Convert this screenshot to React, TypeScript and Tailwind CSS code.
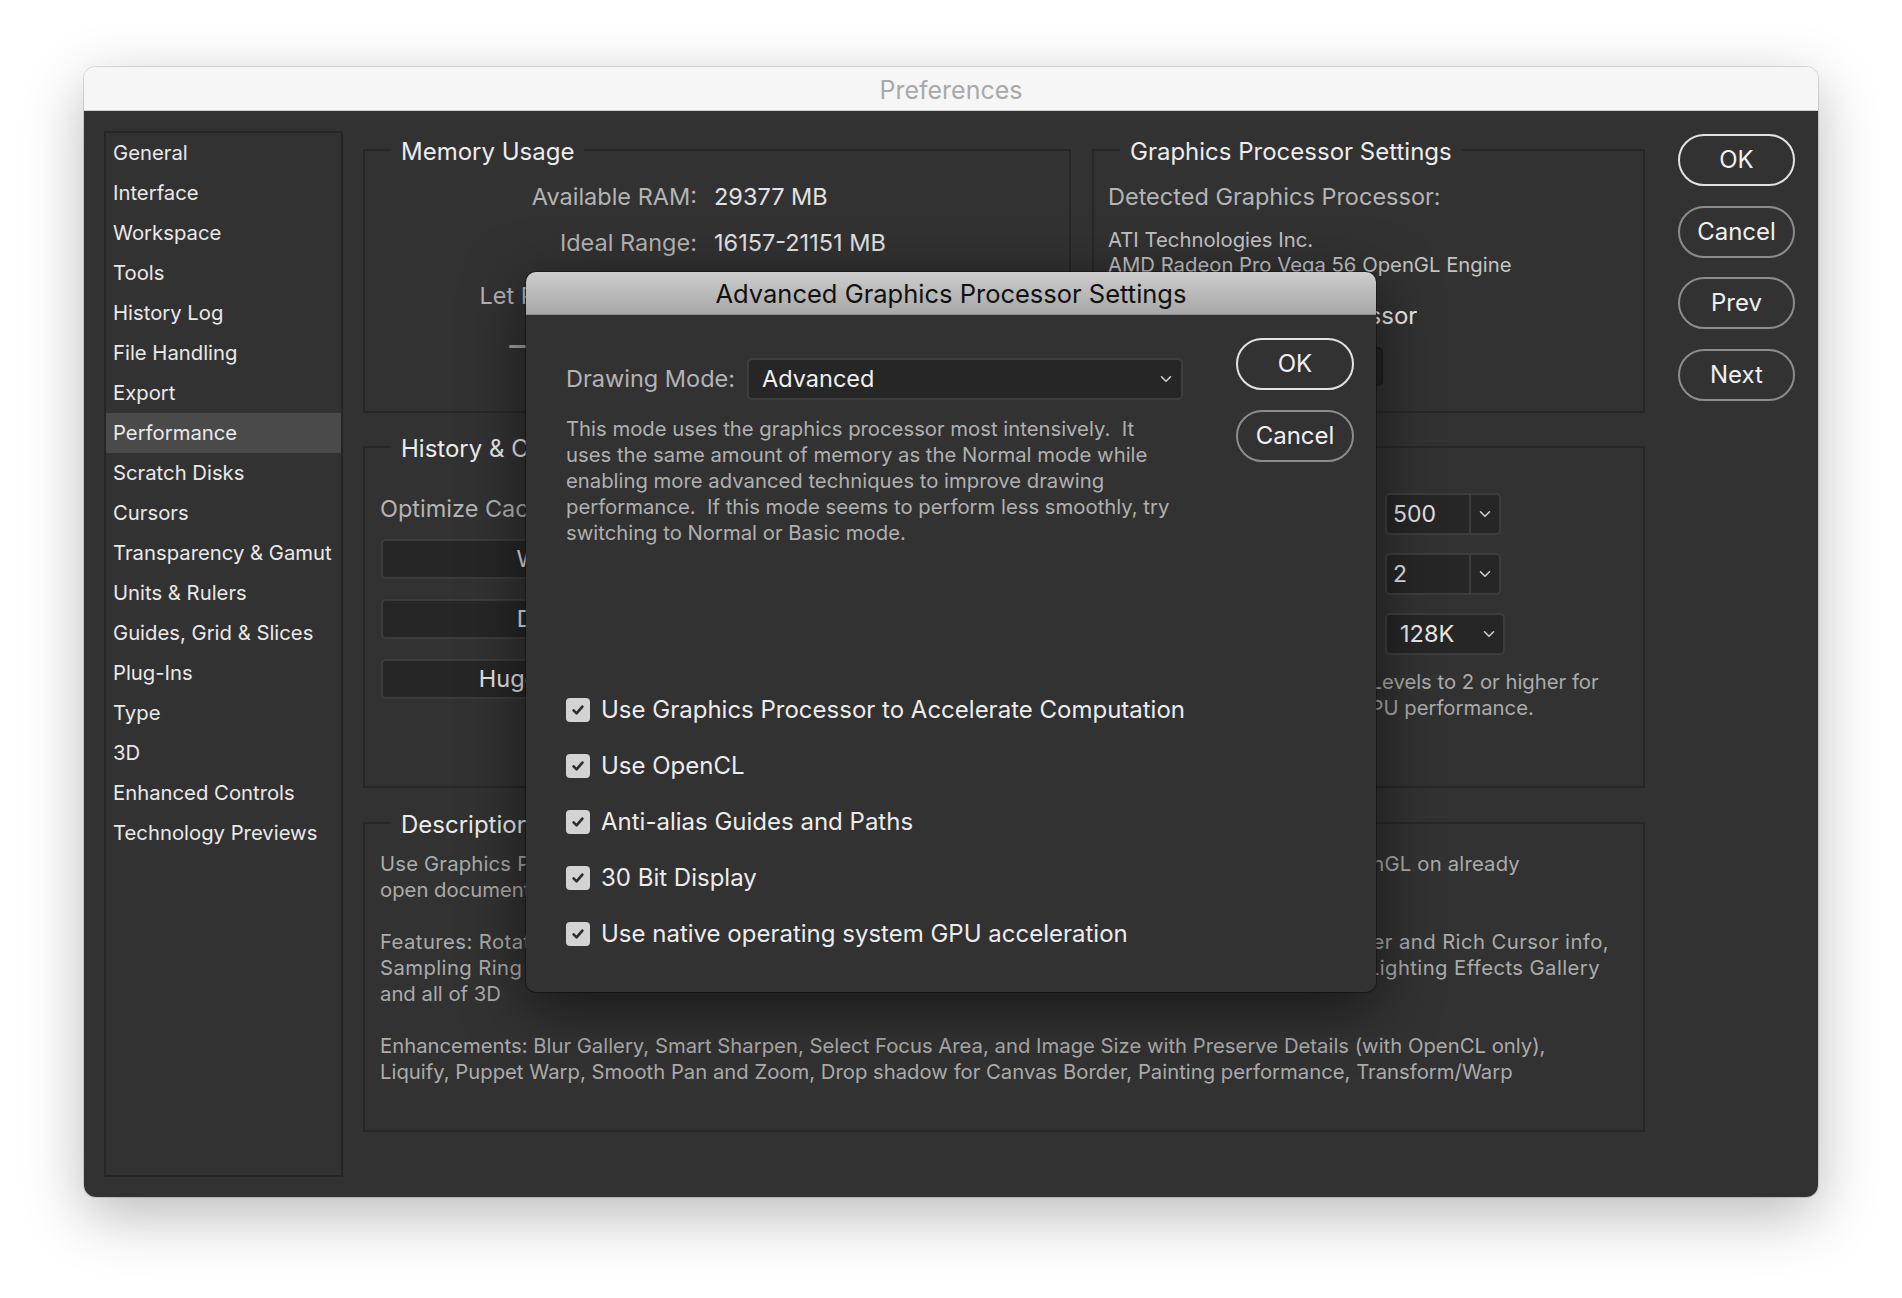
import React from 'react';

const navItems = [
  'General',
  'Interface',
  'Workspace',
  'Tools',
  'History Log',
  'File Handling',
  'Export',
  'Performance',
  'Scratch Disks',
  'Cursors',
  'Transparency & Gamut',
  'Units & Rulers',
  'Guides, Grid & Slices',
  'Plug-Ins',
  'Type',
  '3D',
  'Enhanced Controls',
  'Technology Previews',
];

const advancedOptions = [
  'Use Graphics Processor to Accelerate Computation',
  'Use OpenCL',
  'Anti-alias Guides and Paths',
  '30 Bit Display',
  'Use native operating system GPU acceleration',
];

function Chevron({ className = '' }: { className?: string }) {
  return (
    <svg viewBox="0 0 12 8" className={className} fill="none" stroke="currentColor" strokeWidth="1.6" strokeLinecap="round" strokeLinejoin="round">
      <path d="M1.5 1.8 6 6.2l4.5-4.4" />
    </svg>
  );
}

function CheckBox() {
  return (
    <span className="flex h-[24px] w-[24px] shrink-0 items-center justify-center rounded-[4px] bg-[#d3d3d3]">
      <svg viewBox="0 0 16 16" className="h-[16px] w-[16px]" fill="none" stroke="#2c2c2c" strokeWidth="2.6" strokeLinecap="round" strokeLinejoin="round">
        <path d="M3.6 8.4 6.6 11.4 12.4 4.6" />
      </svg>
    </span>
  );
}

function PillButton({ label, primary = false }: { label: string; primary?: boolean }) {
  return (
    <button
      className={`flex h-[52px] w-full items-center justify-center rounded-full border-2 text-[24px] text-[#f0f0f0] ${
        primary ? 'border-[#e2e2e2]' : 'border-[#8c8c8c]'
      }`}
    >
      {label}
    </button>
  );
}

function GroupBox({ title, className = '', children }: { title: string; className?: string; children: React.ReactNode }) {
  return (
    <fieldset className={`border-2 border-[#272727] ${className}`}>
      <legend className="ml-[26px] px-[10px] text-[24px] leading-[26px] text-[#ececec]">
        <span className="relative top-[2px]">{title}</span>
      </legend>
      {children}
    </fieldset>
  );
}

function DarkButton({ label }: { label: string }) {
  return (
    <div className="flex h-[40px] w-[450px] items-center justify-center rounded-[5px] border-2 border-[#3c3c3c] bg-[#262626] text-[23.5px] text-[#e6e6e6]">
      {label}
    </div>
  );
}

function Combo({ value }: { value: string }) {
  return (
    <div className="flex h-[42px] w-[116px] rounded-[5px] border-2 border-[#3d3d3d] bg-[#262626] text-[23px] text-[#e2e2e2]">
      <span className="flex flex-1 items-center pl-[6px]">{value}</span>
      <span className="flex w-[30px] items-center justify-center border-l-2 border-[#3d3d3d] text-[#cfcfcf]">
        <Chevron className="h-[8px] w-[12px]" />
      </span>
    </div>
  );
}

export default function App() {
  return (
    <div className="min-h-screen bg-white px-[84px] pb-[101px] pt-[67px] font-['Inter','Noto_Sans',sans-serif]">
      <div className="relative flex h-[1130px] flex-col overflow-hidden rounded-[12px] shadow-[0_18px_60px_rgba(0,0,0,0.28),0_0_0_1px_rgba(0,0,0,0.12)]">
        {/* Title bar */}
        <div className="flex h-[44px] shrink-0 items-center justify-center border-b border-[#d0d0d0] bg-[#f6f6f6] pt-[5px] text-[25px] text-[#a9a9a9]">
          Preferences
        </div>

        <div className="flex flex-1 bg-[#323232] px-[20px] pb-[20px] pt-[20px]">
          {/* Sidebar */}
          <div className="w-[239px] shrink-0 border-2 border-[#262626]">
            {navItems.map((item) => (
              <div
                key={item}
                className={`flex h-[40px] items-center whitespace-nowrap pl-[7px] text-[20.3px] text-[#e9e9e9] ${
                  item === 'Performance' ? 'bg-[#4a4a4a]' : ''
                }`}
              >
                {item}
              </div>
            ))}
          </div>

          {/* Main panels */}
          <div className="ml-[20px] mt-[6px] flex w-[1282px] shrink-0 flex-col">
            <div className="flex gap-[21px]">
              <GroupBox title="Memory Usage" className="h-[276px] w-[708px]">
                <div className="grid grid-cols-[332px_1fr] gap-x-[17px] pt-[19px] text-[23.5px] leading-[30px]">
                  <span className="whitespace-nowrap text-right text-[#b4b4b4]">Available RAM:</span>
                  <span className="text-[#e2e2e2]">29377 MB</span>
                  <span className="mt-[16px] whitespace-nowrap text-right text-[#b4b4b4]">Ideal Range:</span>
                  <span className="mt-[16px] text-[#e2e2e2]">16157-21151 MB</span>
                  <span className="mt-[23px] whitespace-nowrap text-right text-[#b4b4b4]">Let Photoshop Use:</span>
                  <span className="mt-[23px] text-[#e2e2e2]">20566 MB (70%)</span>
                </div>
                <div className="ml-[144px] mt-[34px] h-[3px] w-[480px] rounded-full bg-[#a3a3a3]" />
              </GroupBox>

              <GroupBox title="Graphics Processor Settings" className="h-[276px] w-[553px]">
                <div className="pl-[14px]">
                  <div className="whitespace-nowrap pt-[19px] text-[23.5px] leading-[30px] text-[#b4b4b4]">Detected Graphics Processor:</div>
                  <div className="mt-[15px] whitespace-nowrap text-[20.3px] leading-[25px] text-[#c4c4c4]">ATI Technologies Inc.</div>
                  <div className="whitespace-nowrap text-[20.3px] leading-[25px] text-[#c4c4c4]">AMD Radeon Pro Vega 56 OpenGL Engine</div>
                  <div className="mt-[24px] flex h-[30px] items-center gap-[11px] text-[24px] text-[#ececec]">
                    <CheckBox />
                    <span className="whitespace-nowrap">Use Graphics Processor</span>
                  </div>
                  <div className="ml-[32px] mt-[16px] flex h-[39px] w-[243px] items-center justify-center rounded-[5px] border-2 border-[#1f1f1f] bg-[#262626] text-[21px] text-[#e2e2e2]">
                    Advanced Settings...
                  </div>
                </div>
              </GroupBox>
            </div>

            <GroupBox title="History & Cache" className="mt-[21px] h-[354px]">
              <div className="flex">
                <div className="w-[810px] pl-[15px]">
                  <div className="mt-[34px] whitespace-nowrap text-[23.5px] leading-[30px] text-[#b4b4b4]">
                    Optimize Cache Levels and Tile Size for documents that are:
                  </div>
                  <div className="mt-[15px] flex flex-col gap-[20px] pl-[1px]">
                    <DarkButton label="Web / UI Design" />
                    <DarkButton label="Default / Photos" />
                    <DarkButton label="Huge Pixel Dimensions" />
                  </div>
                </div>
                <div className="pt-[33px]">
                  <div className="grid grid-cols-[190px_auto] items-center gap-x-[20px] gap-y-[18px] text-[23.5px] text-[#b4b4b4]">
                    <span className="whitespace-nowrap text-right">History States:</span>
                    <Combo value="500" />
                    <span className="whitespace-nowrap text-right">Cache Levels:</span>
                    <Combo value="2" />
                    <span className="whitespace-nowrap text-right">Cache Tile Size:</span>
                    <div className="flex h-[42px] w-[120px] items-center justify-between rounded-[5px] border-2 border-[#3d3d3d] bg-[#262626] pl-[13px] pr-[8px] text-[23.5px] text-[#e8e8e8]">
                      <span>128K</span>
                      <Chevron className="h-[8px] w-[12px] text-[#cfcfcf]" />
                    </div>
                  </div>
                  <div className="ml-[91px] mt-[14px] whitespace-nowrap text-[20.3px] leading-[26px] text-[#ababab]">
                    Set Cache Levels to 2 or higher for
                    <br />
                    optimum GPU performance.
                  </div>
                </div>
              </div>
            </GroupBox>

            <GroupBox title="Description" className="mt-[22px] h-[322px]">
              <div className="mt-[15px] whitespace-nowrap pl-[15px] text-[20.3px] leading-[26px] text-[#ababab]">
                <p>
                  <span className="tracking-[0.18px]">
                    Use Graphics Processor to enable certain features and interface enhancements. Does not enable OpenGL on already
                  </span>
                  <br />
                  open documents.
                </p>
                <p className="mt-[26px]">
                  <span className="tracking-[0.42px]">
                    Features: Rotate View, Birds Eye Zooming, Pixel Grid, Flick Panning, Scrubby Zoom, HUD Color Picker and Rich Cursor info,
                    <br />
                    Sampling Ring (Eyedropper), On-Canvas Brush Resizing, Bristle Tip Preview, Adaptive Wide Angle, Lighting Effects Gallery
                  </span>
                  <br />
                  and all of 3D
                </p>
                <p className="mt-[26px]">
                  Enhancements: Blur Gallery, Smart Sharpen, Select Focus Area, and Image Size with Preserve Details (with OpenCL only),
                  <br />
                  Liquify, Puppet Warp, Smooth Pan and Zoom, Drop shadow for Canvas Border, Painting performance, Transform/Warp
                </p>
              </div>
            </GroupBox>
          </div>

          {/* Right buttons */}
          <div className="ml-[33px] mt-[3px] flex w-[117px] shrink-0 flex-col gap-[19.5px]">
            <PillButton label="OK" primary />
            <PillButton label="Cancel" />
            <PillButton label="Prev" />
            <PillButton label="Next" />
          </div>
        </div>

        {/* Advanced Graphics Processor Settings dialog */}
        <div className="absolute left-[442px] top-[205px] flex h-[720px] w-[850px] flex-col rounded-[10px] bg-[#323232] shadow-[0_14px_60px_rgba(0,0,0,0.55),0_0_0_1px_rgba(0,0,0,0.35)]">
          <div className="flex h-[43px] shrink-0 items-center justify-center rounded-t-[10px] border-b border-[#8e8e8e] bg-gradient-to-b from-[#cdcdcd] to-[#a7a7a7] pt-[3px] text-[25.5px] text-[#111111]">
            Advanced Graphics Processor Settings
          </div>
          <div className="flex flex-1 items-start pl-[40px]">
            <div className="mt-[43px] w-[617px]">
              <div className="flex items-center gap-[12px]">
                <span className="whitespace-nowrap text-[23.5px] text-[#b4b4b4]">Drawing Mode:</span>
                <div className="flex h-[42px] flex-1 items-center justify-between rounded-[5px] border-2 border-[#3e3e3e] bg-[#262626] pl-[13px] pr-[9px] text-[23.5px] text-[#f0f0f0]">
                  <span>Advanced</span>
                  <Chevron className="h-[8px] w-[12px] text-[#cfcfcf]" />
                </div>
              </div>
              <p className="mt-[16px] whitespace-pre text-[20.3px] leading-[26px] text-[#b0b0b0]">
                {'This mode uses the graphics processor most intensively.  It\nuses the same amount of memory as the Normal mode while\nenabling more advanced techniques to improve drawing\nperformance.  If this mode seems to perform less smoothly, try\nswitching to Normal or Basic mode.'}
              </p>
              <div className="mt-[148px] flex flex-col gap-[24px]">
                {advancedOptions.map((opt) => (
                  <div key={opt} className="flex h-[32px] items-center gap-[11px] text-[24px] text-[#ececec]">
                    <CheckBox />
                    <span className="whitespace-nowrap">{opt}</span>
                  </div>
                ))}
              </div>
            </div>
            <div className="ml-[53px] mt-[23px] flex w-[118px] flex-col gap-[20px]">
              <PillButton label="OK" primary />
              <PillButton label="Cancel" />
            </div>
          </div>
        </div>
      </div>
    </div>
  );
}
